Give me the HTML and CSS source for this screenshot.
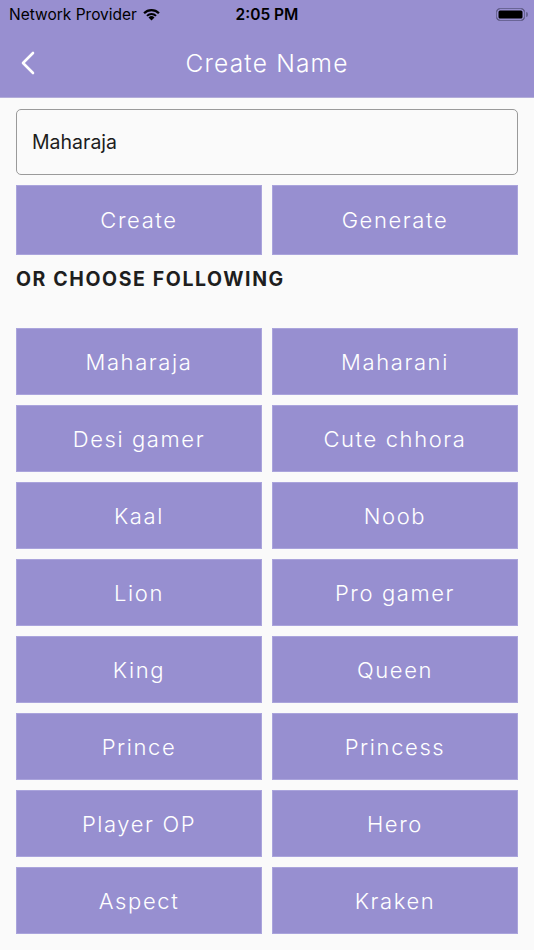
FILE: index.html
```html
<!DOCTYPE html>
<html>
<head>
<meta name="viewport" content="width=device-width, initial-scale=1">
<link rel="stylesheet" href="styles.css">
</head>
<body>
<div class="top">
  <div class="status">
    <div class="carrier">Network Provider
      <svg class="wifi" width="19" height="14" viewBox="0 0 20 15">
        <path d="M10 14.5 L6.8 11.2 A4.6 4.6 0 0 1 13.2 11.2 Z" fill="#000"/>
        <path d="M4.4 8.8 A8 8 0 0 1 15.6 8.8 L14.1 10.3 A5.9 5.9 0 0 0 5.9 10.3 Z" fill="#000"/>
        <path d="M1.2 5.8 A12.4 12.4 0 0 1 18.8 5.8 L17.1 7.5 A10 10 0 0 0 2.9 7.5 Z" fill="#000"/>
      </svg>
    </div>
    <div class="time">2:05 PM</div>
    <div class="battery"><span class="cell"></span><span class="nub"></span></div>
  </div>
  <div class="nav">
    <svg class="back" width="14" height="24" viewBox="0 0 14 24">
      <path d="M12 2 L2 12 L12 22" fill="none" stroke="#fff" stroke-width="2.6" stroke-linecap="round" stroke-linejoin="round"/>
    </svg>
    <div class="title">Create Name</div>
  </div>
</div>

<div class="content">
  <div class="field">Maharaja</div>
  <div class="actions">
    <div class="btn">Create</div>
    <div class="btn">Generate</div>
  </div>
  <div class="heading">OR CHOOSE FOLLOWING</div>
  <div class="names">
    <div class="btn name">Maharaja</div>
    <div class="btn name">Maharani</div>
    <div class="btn name">Desi gamer</div>
    <div class="btn name">Cute chhora</div>
    <div class="btn name">Kaal</div>
    <div class="btn name">Noob</div>
    <div class="btn name">Lion</div>
    <div class="btn name">Pro gamer</div>
    <div class="btn name">King</div>
    <div class="btn name">Queen</div>
    <div class="btn name">Prince</div>
    <div class="btn name">Princess</div>
    <div class="btn name">Player OP</div>
    <div class="btn name">Hero</div>
    <div class="btn name">Aspect</div>
    <div class="btn name">Kraken</div>
  </div>
</div>
</body>
</html>
```

FILE: styles.css
```css
body {
  margin: 0;
  background-color: #fafafa;
  font-family: Inter, "Noto Sans", sans-serif;
  overflow: hidden;
}

.top {
  background-color: #988fd0;
  height: 97px;
  border-bottom: 1px solid #b3add9;
}

.status {
  height: 28px;
  display: flex;
  align-items: center;
  justify-content: space-between;
  padding: 0 6px 0 9px;
  font-size: 15.5px;
  color: #000;
  position: relative;
}

.carrier {
  display: flex;
  align-items: center;
  gap: 5px;
}

.time {
  position: absolute;
  left: 0;
  right: 0;
  text-align: center;
  font-weight: 600;
  font-size: 15.5px;
}

.battery {
  display: flex;
  align-items: center;
  gap: 1px;
}

.cell {
  width: 27px;
  height: 11px;
  background: #000;
  border: 1.5px solid #6a6596;
  border-radius: 4px;
  box-shadow: inset 0 0 0 1.5px #988fd0;
}

.nub {
  width: 2px;
  height: 5px;
  background: #6a6596;
  border-radius: 0 2px 2px 0;
}

.nav {
  height: 69px;
  display: flex;
  align-items: center;
  position: relative;
}

.back {
  margin-left: 21px;
}

.title {
  position: absolute;
  left: 0;
  right: 0;
  text-align: center;
  color: #fff;
  font-size: 24.5px;
  font-weight: 300;
  letter-spacing: 1.2px;
  pointer-events: none;
}

.content {
  padding: 11px 16px 0 16px;
}

.field {
  height: 64px;
  border: 1px solid #9a9a9a;
  border-radius: 5px;
  background: #fafafa;
  display: flex;
  align-items: center;
  padding-left: 15px;
  font-size: 19.5px;
  color: #1d1d1d;
}

.actions {
  display: grid;
  grid-template-columns: 1fr 1fr;
  gap: 10px;
  margin-top: 10px;
}

.btn {
  background-color: #978fd0;
  border: 1px solid #aaa4dc;
  color: #fff;
  font-size: 22px;
  font-weight: 300;
  letter-spacing: 1.6px;
  display: flex;
  align-items: center;
  justify-content: center;
  height: 70px;
  box-sizing: border-box;
}

.heading {
  font-weight: 700;
  font-size: 19.5px;
  color: #1e1e1e;
  letter-spacing: 1.6px;
  margin-top: 12px;
  height: 61px;
}

.names {
  display: grid;
  grid-template-columns: 1fr 1fr;
  column-gap: 10px;
  row-gap: 10px;
}

.name {
  height: 67px;
}
```
